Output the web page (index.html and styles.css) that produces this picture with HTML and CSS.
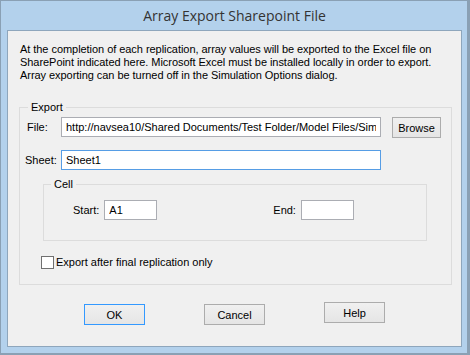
FILE: index.html
```html
<!DOCTYPE html>
<html lang="en">
<head>
  <meta charset="UTF-8" />
  <title>Array Export Sharepoint File</title>
  <link rel="stylesheet" href="styles.css">
</head>
<body>

<div class="window">
  <div class="titlebar">Array Export Sharepoint File</div>

  <div class="client">
    <p class="intro">
      At the completion of each replication, array values will be exported to the Excel file on<br>
      SharePoint indicated here. Microsoft Excel must be installed locally in order to export.<br>
      Array exporting can be turned off in the Simulation Options dialog.
    </p>

    <fieldset class="group export">
      <legend>Export</legend>

      <div class="row">
        <label class="lbl lbl-file">File:</label>
        <input class="text wide" type="text" value="http://navsea10/Shared Documents/Test Folder/Model Files/Simulation Results.xlsx">
        <button class="btn browse">Browse</button>
      </div>

      <div class="row sheet-row">
        <label class="lbl lbl-sheet">Sheet:</label>
        <input class="text wide focused" type="text" value="Sheet1">
      </div>

      <fieldset class="group cell">
        <legend>Cell</legend>
        <div class="cell-row">
          <label class="lbl">Start:</label>
          <input class="text small" type="text" value="A1">
          <label class="lbl lbl-end">End:</label>
          <input class="text small" type="text" value="">
        </div>
      </fieldset>

      <label class="check">
        <input type="checkbox">
        <span>Export after final replication only</span>
      </label>
    </fieldset>

    <div class="buttons">
      <button class="btn push default">OK</button>
      <button class="btn push">Cancel</button>
      <button class="btn push help">Help</button>
    </div>
  </div>
</div>

</body>
</html>
```

FILE: styles.css
```css
body {
  margin: 0;
  font-family: "Liberation Sans", Arial, sans-serif;
  font-size: 11px;
  color: #000;
  background: #b3d1ec;
}

.window {
  box-sizing: border-box;
  width: 470px;
  height: 355px;
  display: flex;
  flex-direction: column;
  background: #b3d1ec;
  border-style: solid;
  border-color: #8aa0b4;
  border-width: 1px 3px 2px 1px;
  padding: 0 5px 6px 6px;
}

.titlebar {
  height: 29px;
  line-height: 29px;
  text-align: center;
  font-family: "Open Sans", "Noto Sans", sans-serif;
  font-size: 14px;
  color: #333;
}

.client {
  flex: 1;
  background: #f0f0f0;
  border: 1px solid #8ea6bc;
  padding: 12px 9px 0 11px;
}

.intro {
  margin: 0 0 19px 1px;
  line-height: 13px;
  letter-spacing: -0.05px;
}

.group {
  margin: 0;
  border: 1px solid #dcdcdc;
  padding: 0;
}

.group legend {
  padding: 0 3px;
  line-height: 13px;
}

.export {
  padding: 3px 0 15px 0;
}

.export legend {
  margin-left: 8px;
}

.row {
  display: flex;
  align-items: flex-start;
}

.sheet-row {
  margin-top: 12px;
}

.lbl {
  line-height: 20px;
}

.lbl-file {
  margin-left: 7px;
  width: 34px;
}

.lbl-sheet {
  margin-left: 5px;
  width: 36px;
}

.text {
  box-sizing: border-box;
  height: 20px;
  margin: 0;
  padding: 0 4px;
  border: 1px solid #abadb3;
  background: #fff;
  font: inherit;
  color: #000;
  outline: none;
}

.wide {
  width: 320px;
}

.focused {
  border-color: #569de5;
}

.btn {
  box-sizing: border-box;
  margin: 0;
  padding: 0;
  height: 21px;
  font: inherit;
  color: #000;
  background: linear-gradient(#f0f0f0, #e5e5e5);
  border: 1px solid #acacac;
}

.browse {
  width: 49px;
  margin-left: 11px;
}

.cell {
  margin: 8px 24px 0 23px;
  padding: 9px 0 20px 0;
}

.cell legend {
  margin-left: 7px;
}

.cell-row {
  display: flex;
  align-items: center;
}

.cell-row .lbl:first-child {
  margin-left: 29px;
  margin-right: 5px;
}

.small {
  width: 53px;
}

.lbl-end {
  margin-left: 116px;
  margin-right: 5px;
}

.check {
  display: flex;
  align-items: center;
  margin: 15px 0 0 21px;
  line-height: 13px;
}

.check input {
  appearance: none;
  box-sizing: border-box;
  width: 13px;
  height: 13px;
  margin: 0 2px 0 0;
  border: 1px solid #707070;
  background: #fff;
}

.buttons {
  display: flex;
  align-items: flex-start;
  gap: 59px;
  margin: 17px 0 0 65px;
}

.push {
  width: 61px;
  margin-top: 2px;
}

.default {
  border-color: #3399ff;
}

.help {
  margin-top: 0;
}
```
